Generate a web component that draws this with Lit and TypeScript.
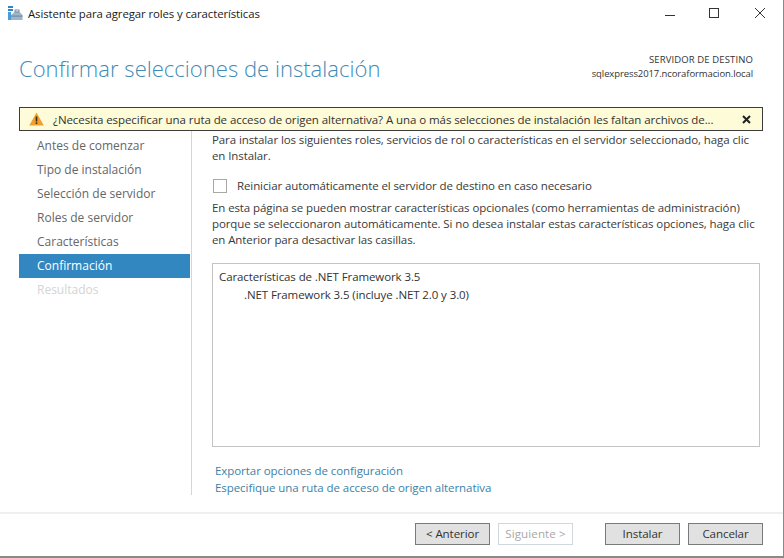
import { LitElement, html, css } from "lit";
import { customElement } from "lit/decorators.js";

@customElement("app-root")
export class AppRoot extends LitElement {
  static styles = css`
    :host { display: block; width: 784px; height: 558px; overflow: hidden; background: #fff; font-family: "Open Sans", "Noto Sans", sans-serif; font-size: 11.5px; color: #3a3a3a; letter-spacing: -0.1px; }
    * { box-sizing: border-box; }
    .window { width: 784px; height: 558px; border-right: 1px solid #8a8a8a; border-bottom: 2px solid #8a8a8a; display: flex; flex-direction: column; }
    .titlebar { height: 30px; display: flex; align-items: center; padding: 0 0 3px 8px; gap: 5px; color: #1a1a1a; }
    .titlebar .t { flex: 1; font-size: 11.4px; }
    .caps { display: flex; align-items: center; gap: 35px; margin-right: 18px; margin-top: -1px; }
    .caps svg { display: block; width: 10px; height: 10px; }
    .caps svg.max { margin-left: -1px; }
    .caps svg.close { margin-left: 1px; }
    .header { height: 77px; display: flex; justify-content: space-between; padding: 0 30px 0 19px; }
    h1 { margin: 22px 0 0; font-weight: 300; font-size: 22px; letter-spacing: 0.03px; color: #3d8bb5; line-height: 32px; }
    .server { text-align: right; margin-top: 23px; font-size: 9.5px; line-height: 14px; color: #333; letter-spacing: -0.1px; }
    .server span { letter-spacing: 0.12px; }
    .alert { margin: 0 20px 0 19px; height: 24px; border: 1px solid #3c3c3c; background: #fdfbd8; display: flex; align-items: center; padding: 0 11px 0 9px; color: #333; }
    .alert .msg { flex: 1; margin-left: 9px; letter-spacing: -0.07px; font-size: 11.5px; }
    .alert svg { display: block; }
    .body { flex: 1; display: flex; padding-left: 19px; min-height: 0; }
    nav { width: 173px; border-right: 1px solid #d6d6d6; height: 364px; padding-top: 3px; padding-right: 1px; }
    nav div { height: 24px; line-height: 24px; padding-left: 18px; color: #666; letter-spacing: 0; font-size: 12px; }
    nav div.sel { background: #3287c1; color: #fff; }
    nav div.dis { color: #d4d4d4; }
    main { flex: 1; padding: 1px 23px 0 20px; display: flex; flex-direction: column; }
    p { margin: 0; line-height: 16.3px; }
    .check { display: flex; align-items: center; margin: 14px 0 7px 1px; gap: 10px; height: 14px; }
    .box { width: 14px; height: 14px; border: 1px solid #a8a8a8; flex: none; background: #fff; }
    .list { margin-top: 15px; height: 184px; border: 1px solid #c4c4c4; padding: 4px 6px; line-height: 18px; color: #333; }
    .list .sub { padding-left: 25px; }
    .links { margin: 16px 0 0 3px; color: #3b82a8; line-height: 16.5px; letter-spacing: -0.06px; }
    .footer { height: 44px; flex: none; border-top: 2px solid #efefef; display: flex; align-items: flex-start; justify-content: flex-end; padding: 9px 20px 0 0; }
    .btn { width: 75px; height: 22px; border: 1px solid #7a7a7a; background: #e1e1e1; text-align: center; line-height: 20px; color: #333; font-size: 11.6px; }
    .btn.dis { background: #fff; border-color: #d0d8dc; color: #a8a8a8; margin-left: 8px; letter-spacing: 0.1px; }
    .btn.in { margin-left: 32px; }
    .btn.ca { margin-left: 8px; }
  `;
  render() {
    const steps = ["Antes de comenzar", "Tipo de instalación", "Selección de servidor", "Roles de servidor", "Características"];
    return html`<div class="window">
      <div class="titlebar">
        <svg width="15" height="16" viewBox="0 0 15 16">
          <rect x="0" y="0" width="5" height="2" fill="#2e86c8"/>
          <rect x="0" y="3" width="5" height="2" fill="#2e86c8"/>
          <rect x="0" y="6" width="3" height="8" fill="#4a9bd8"/>
          <path d="M3 9 L7 5.5 H11 L14.5 9 V14 H3 Z" fill="#9db6c8"/>
          <rect x="3" y="9.5" width="11.5" height="1.2" fill="#6f8ea6"/>
          <rect x="7" y="4" width="4" height="2" fill="none" stroke="#7d8f9c" stroke-width="1"/>
        </svg>
        <span class="t">Asistente para agregar roles y características</span>
        <div class="caps">
          <svg viewBox="0 0 10 10"><path d="M0 7.5H10" stroke="#333" fill="none"/></svg>
          <svg class="max" viewBox="0 0 10 10"><rect x="0.5" y="0.5" width="9" height="9" stroke="#333" fill="none"/></svg>
          <svg class="close" viewBox="0 0 10 10"><path d="M0 0 L10 10 M10 0 L0 10" stroke="#333" fill="none"/></svg>
        </div>
      </div>
      <div class="header">
        <h1>Confirmar selecciones de instalación</h1>
        <div class="server"><span>SERVIDOR DE DESTINO</span><br/>sqlexpress2017.ncoraformacion.local</div>
      </div>
      <div class="alert">
        <svg width="15" height="14" viewBox="0 0 15 14"><path d="M7.5 0.5 L14.8 13.5 H0.2 Z" fill="#f0a030"/><rect x="6.7" y="4.5" width="1.6" height="5" fill="#3a2a10"/><rect x="6.7" y="10.3" width="1.6" height="1.6" fill="#3a2a10"/></svg>
        <span class="msg">¿Necesita especificar una ruta de acceso de origen alternativa? A una o más selecciones de instalación les faltan archivos de...</span>
        <svg width="9" height="9" viewBox="0 0 9 9"><path d="M1 1 L8 8 M8 1 L1 8" stroke="#222" stroke-width="2"/></svg>
      </div>
      <div class="body">
        <nav>
          ${steps.map((s) => html`<div>${s}</div>`)}
          <div class="sel">Confirmación</div>
          <div class="dis">Resultados</div>
        </nav>
        <main>
          <p>Para instalar los siguientes roles, servicios de rol o características en el servidor seleccionado, haga clic en Instalar.</p>
          <div class="check"><span class="box"></span><span>Reiniciar automáticamente el servidor de destino en caso necesario</span></div>
          <p>En esta página se pueden mostrar características opcionales (como herramientas de administración) porque se seleccionaron automáticamente. Si no desea instalar estas características opciones, haga clic en Anterior para desactivar las casillas.</p>
          <div class="list">
            <div>Características de .NET Framework 3.5</div>
            <div class="sub">.NET Framework 3.5 (incluye .NET 2.0 y 3.0)</div>
          </div>
          <div class="links"><div>Exportar opciones de configuración</div><div>Especifique una ruta de acceso de origen alternativa</div></div>
        </main>
      </div>
      <div class="footer">
        <div class="btn">&lt; Anterior</div>
        <div class="btn dis">Siguiente &gt;</div>
        <div class="btn in">Instalar</div>
        <div class="btn ca">Cancelar</div>
      </div>
    </div>`;
  }
}
